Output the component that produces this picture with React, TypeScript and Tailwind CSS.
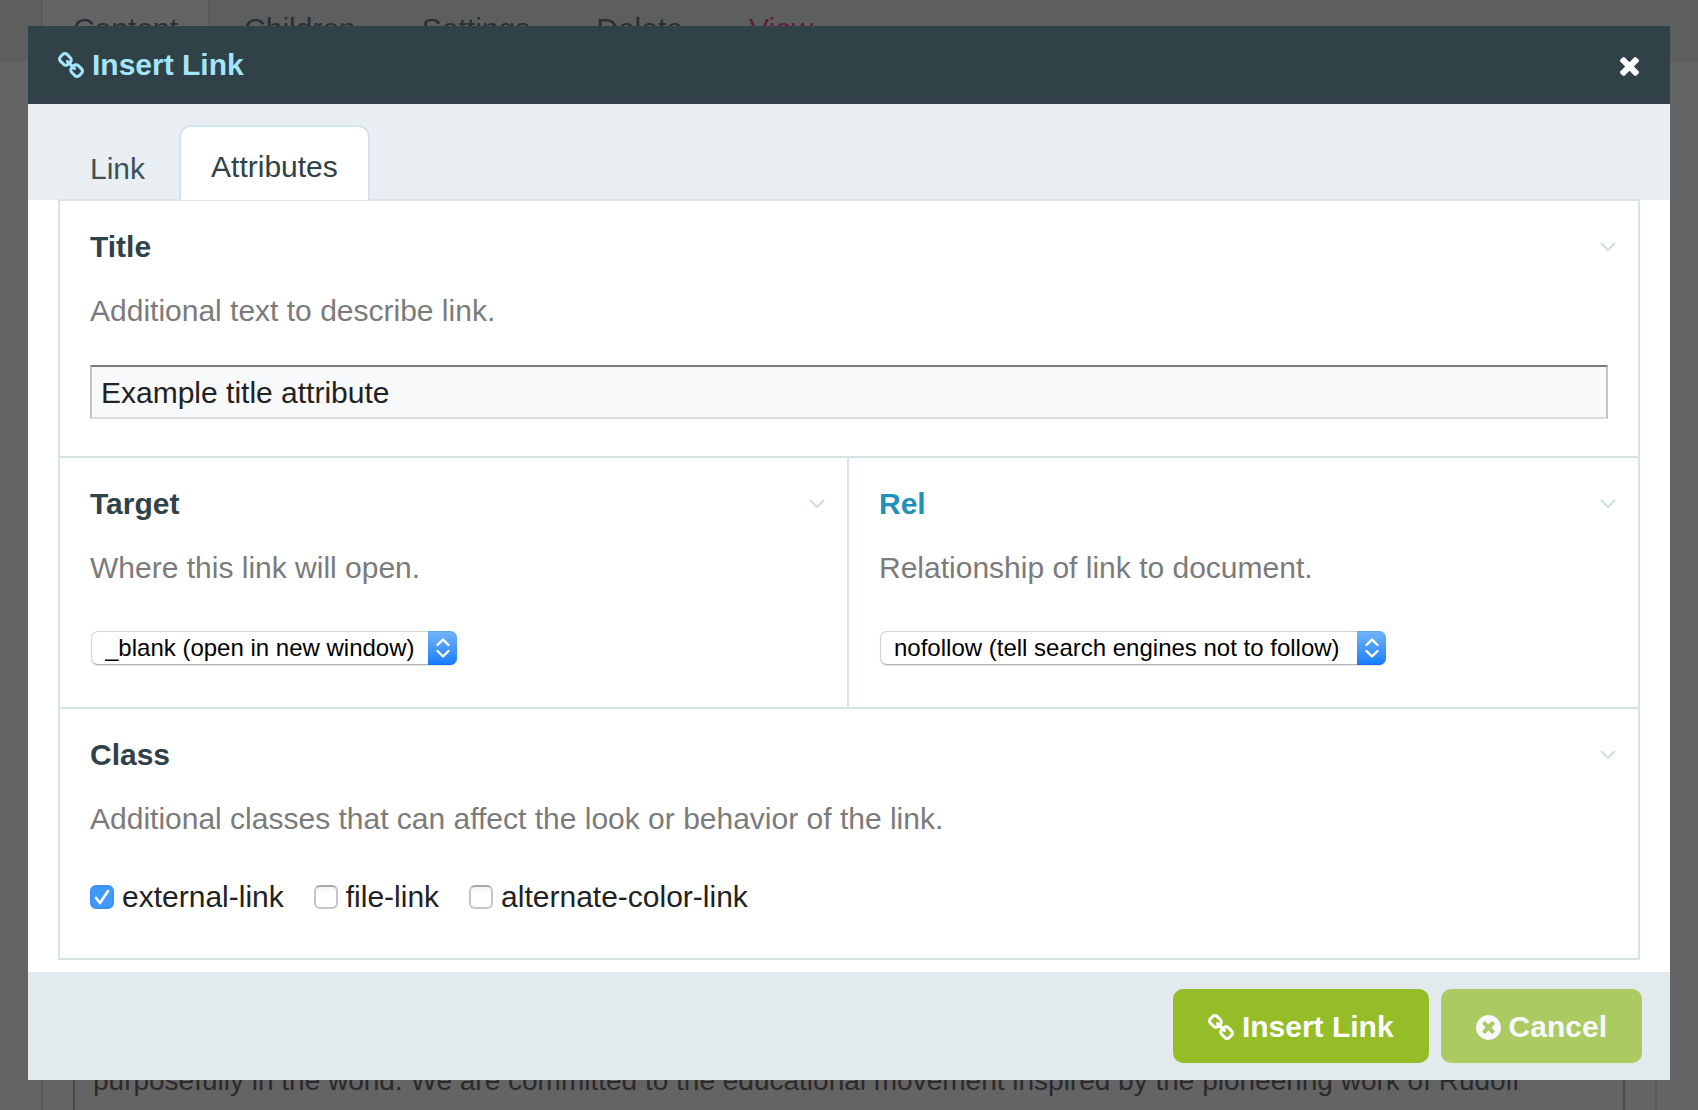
import { useState, type ReactNode } from 'react';
import clsx from 'clsx';

const CLASS_OPTIONS = ['external-link', 'file-link', 'alternate-color-link'];

const PAGE_TABS = ['Children', 'Settings', 'Delete'];

function ChainIcon() {
  return (
    <svg viewBox="16 16 1632 1632" className="h-[26px] w-[26px] shrink-0" fill="currentColor" aria-hidden="true">
      <path d="M1456 1216q0-40-28-68l-208-208q-28-28-68-28-42 0-72 32 3 3 19 18.5t21.5 21.5 15 19 13 25.5 3.5 27.5q0 40-28 68t-68 28q-15 0-27.5-3.5t-25.5-13-19-15-21.5-21.5-18.5-19q-33 31-33 73 0 40 28 68l206 207q27 27 68 27 40 0 68-26l147-146q28-28 28-67zm-703-705q0-40-28-68l-206-207q-28-28-68-28-39 0-68 27l-147 146q-28 28-28 67 0 40 28 68l208 208q27 27 68 27 42 0 72-31-3-3-19-18.5t-21.5-21.5-15-19-13-25.5-3.5-27.5q0-40 28-68t68-28q15 0 27.5 3.5t25.5 13 19 15 21.5 21.5 18.5 19q33-31 33-73zm895 705q0 120-85 203l-147 146q-83 83-203 83-121 0-204-85l-206-207q-83-83-83-203 0-123 88-209l-88-88q-86 88-208 88-120 0-204-84l-208-208q-84-84-84-204t85-203l147-146q83-83 203-83 121 0 204 85l206 207q83 83 83 203 0 123-88 209l88 88q86-88 208-88 120 0 204 84l208 208q84 84 84 204z" />
    </svg>
  );
}

function TimesIcon() {
  return (
    <svg viewBox="302 366 1188 1188" className="h-[19px] w-[19px]" fill="currentColor" aria-hidden="true">
      <path d="M1490 1322q0 40-28 68l-136 136q-28 28-68 28t-68-28l-294-294-294 294q-28 28-68 28t-68-28l-136-136q-28-28-28-68t28-68l294-294-294-294q-28-28-28-68t28-68l136-136q28-28 68-28t68 28l294 294 294-294q28-28 68-28t68 28l136 136q28 28 28 68t-28 68l-294 294 294 294q28 28 28 68z" />
    </svg>
  );
}

function TimesCircleIcon() {
  return (
    <svg viewBox="128 128 1536 1536" className="h-[25px] w-[25px] shrink-0" fill="currentColor" aria-hidden="true">
      <path d="M1277 1122q0-26-19-45l-181-181 181-181q19-19 19-45 0-27-19-46l-90-90q-19-19-46-19-26 0-45 19l-181 181-181-181q-19-19-45-19-27 0-46 19l-90 90q-19 19-19 46 0 26 19 45l181 181-181 181q-19 19-19 45 0 27 19 46l90 90q19 19 46 19 26 0 45-19l181-181 181 181q19 19 45 19 27 0 46-19l90-90q19-19 19-46zm387-226q0 209-103 385.5t-279.5 279.5-385.5 103-385.5-103-279.5-279.5-103-385.5 103-385.5 279.5-279.5 385.5-103 385.5 103 279.5 279.5 103 385.5z" />
    </svg>
  );
}

interface FieldProps {
  label: string;
  htmlFor?: string;
  description: string;
  highlight?: boolean;
  className?: string;
  children: ReactNode;
}

function Field({ label, htmlFor, description, highlight, className, children }: FieldProps) {
  const Label = htmlFor ? 'label' : 'h2';

  return (
    <section className={clsx('border-[#d6e3e7] px-[30px] pt-[29px]', className)}>
      <div className="flex items-center justify-between">
        <Label htmlFor={htmlFor} className={clsx('font-bold', highlight ? 'text-[#2190b8]' : 'text-[#2f4248]')}>
          {label}
        </Label>
        <button type="button" aria-label={`Toggle ${label}`} className="-mr-2 pb-[2px] text-[#cddce1]">
          <svg viewBox="0 0 16 9" className="h-[9px] w-4" fill="none" stroke="currentColor" strokeWidth="2">
            <path d="M1 1l7 7 7-7" />
          </svg>
        </button>
      </div>
      <p className="mt-[30px] text-[#7b7b7b]">{description}</p>
      {children}
    </section>
  );
}

interface SelectProps {
  id: string;
  options: string[];
  className: string;
}

function Select({ id, options, className }: SelectProps) {
  return (
    <div className={clsx('relative mt-[46px] mb-[42px] ml-px h-[34px]', className)}>
      <select
        id={id}
        className="block h-full w-full appearance-none rounded-[7px] border border-[#d2d2d2] border-b-[#b4b4b4] bg-white pr-8 pl-[13px] text-[24px] leading-8 text-black shadow-[0_1px_1px_rgba(0,0,0,0.12)]"
      >
        {options.map((option) => (
          <option key={option}>{option}</option>
        ))}
      </select>
      {/* Stepper cap */}
      <span className="pointer-events-none absolute inset-y-0 right-0 flex w-[29px] items-center justify-center rounded-r-[7px] border-t border-b border-t-[#5ba6f0] border-b-[#1470f0] bg-linear-to-b from-[#6eb3f8] to-[#157efb]">
        <svg viewBox="0 0 14 20" className="h-5 w-[14px]" fill="none" stroke="white" strokeWidth="2.4" strokeLinecap="round" strokeLinejoin="round">
          <path d="M1.5 7L7 1.5 12.500 7M1.500 13L7 18.500 12.500 13" />
        </svg>
      </span>
    </div>
  );
}

function PageBehind() {
  return (
    <div className="absolute inset-0 flex flex-col overflow-hidden bg-[#646464] text-[#2a3033]" aria-hidden="true">
      <div className="flex h-[62px] shrink-0 gap-[2px] bg-[#5d5f5e] pl-[41px]">
        <div className="border-x-2 border-[#565b5e] bg-[#646464] px-[30px] pt-3">Content</div>
        {PAGE_TABS.map((tab) => (
          <div key={tab} className="px-8 pt-3">
            {tab}
          </div>
        ))}
        <div className="px-8 pt-3 text-[#5f1e3e]">View</div>
      </div>
      <div className="mx-[41px] flex flex-1 border-x-2 border-[#565b5f] pr-[30px] pl-[30px]">
        <div className="flex min-w-0 flex-1 items-end border-x-2 border-[#4c4c4c] px-[18px] pb-3 text-[28px] text-[#2b2b2b]">
          <p className="whitespace-nowrap">
            purposefully in the world. We are committed to the educational movement inspired by the pioneering work of
            Rudolf
          </p>
        </div>
      </div>
    </div>
  );
}

export default function App() {
  const [title, setTitle] = useState('Example title attribute');
  const [classes, setClasses] = useState(['external-link']);

  const toggleClass = (name: string) => {
    setClasses((current) => (current.includes(name) ? current.filter((c) => c !== name) : [...current, name]));
  };

  return (
    <div className="relative flex min-h-screen flex-col font-['Liberation_Sans',Arial,sans-serif] text-[30px] leading-[34px]">
      <PageBehind />

      <div role="dialog" aria-labelledby="dialog-title" className="relative mx-7 mt-[26px] mb-[30px] bg-white">
        {/* Title bar */}
        <header className="flex items-center justify-between border-b border-[#343d4b] bg-[#304148] px-[30px] pt-[22px] pb-[21px]">
          <h1 id="dialog-title" className="flex items-center gap-2 font-bold text-[#a5e5fb]">
            <ChainIcon />
            Insert Link
          </h1>
          <button type="button" aria-label="Close" className="mr-px pt-[2px] text-white">
            <TimesIcon />
          </button>
        </header>

        {/* Tabs */}
        <nav className="flex items-end bg-[#e8eef1] px-[30px] pt-[21px]">
          <a href="#link" className="pr-[34px] pb-[14px] pl-8 text-[#3c5159]">
            Link
          </a>
          {/* The open tab covers the top edge of the panel below */}
          <a
            href="#attributes"
            className="relative rounded-t-xl border-2 border-b-0 border-[#d3e4ea] bg-white px-[30px] pt-[23px] pb-4 text-[#2f4248]"
          >
            Attributes
          </a>
        </nav>

        {/* Fields */}
        <div className="px-[30px] pb-3">
          <div className="-mt-px grid grid-cols-2 border-2 border-[#d6e3e7]">
            <Field
              label="Title"
              htmlFor="link-title"
              description="Additional text to describe link."
              className="col-span-2 border-b-2"
            >
              <input
                id="link-title"
                type="text"
                value={title}
                onChange={(e) => setTitle(e.target.value)}
                className="my-[37px] block h-[54px] w-full border-2 border-t-[#7b7b7b] border-r-[#c3c3c3] border-b-[#dcdcdc] border-l-[#c3c3c3] bg-[#f8f9fb] px-[9px] pt-[2px] text-[#222]"
              />
            </Field>
            <Field
              label="Target"
              htmlFor="link-target"
              description="Where this link will open."
              className="border-r-2 border-b-2"
            >
              <Select id="link-target" options={['_blank (open in new window)']} className="w-[366px]" />
            </Field>
            <Field
              label="Rel"
              htmlFor="link-rel"
              description="Relationship of link to document."
              highlight
              className="border-b-2"
            >
              <Select id="link-rel" options={['nofollow (tell search engines not to follow)']} className="w-[506px]" />
            </Field>
            <Field
              label="Class"
              description="Additional classes that can affect the look or behavior of the link."
              className="col-span-2"
            >
              <div className="my-11 flex gap-[30px] text-[#222]">
                {CLASS_OPTIONS.map((name) => (
                  <label key={name} className="flex items-center gap-2">
                    <span className="relative h-6 w-6">
                      <input
                        type="checkbox"
                        checked={classes.includes(name)}
                        onChange={() => toggleClass(name)}
                        className="peer block h-6 w-6 appearance-none rounded-[6px] border-2 border-[#c6c6c6] border-t-[#a8a8a8] bg-white bg-linear-to-b from-[#f4f4f4] to-white to-30% checked:border-[#3b92f2] checked:from-[#3f97f6] checked:to-[#3f9bfb]"
                      />
                      <svg
                        viewBox="0 0 24 24"
                        className="pointer-events-none absolute inset-0 hidden peer-checked:block"
                        fill="none"
                        stroke="white"
                        strokeWidth="2.6"
                        strokeLinecap="round"
                        strokeLinejoin="round"
                      >
                        <path d="M6 13l4 5 8-12" />
                      </svg>
                    </span>
                    {name}
                  </label>
                ))}
              </div>
            </Field>
          </div>
        </div>

        {/* Actions */}
        <footer className="flex justify-end gap-3 bg-[#e2eaed] px-7 py-[17px] font-bold">
          <button
            type="button"
            className="flex items-center gap-2 rounded-[10px] bg-[#94bd28] px-[35px] pt-[21px] pb-[19px] text-white"
          >
            <ChainIcon />
            Insert Link
          </button>
          <button
            type="button"
            className="flex items-center gap-2 rounded-[10px] bg-[#abcb62] px-[35px] pt-[21px] pb-[19px] text-[#f8f9fb]"
          >
            <TimesCircleIcon />
            Cancel
          </button>
        </footer>
      </div>
    </div>
  );
}
